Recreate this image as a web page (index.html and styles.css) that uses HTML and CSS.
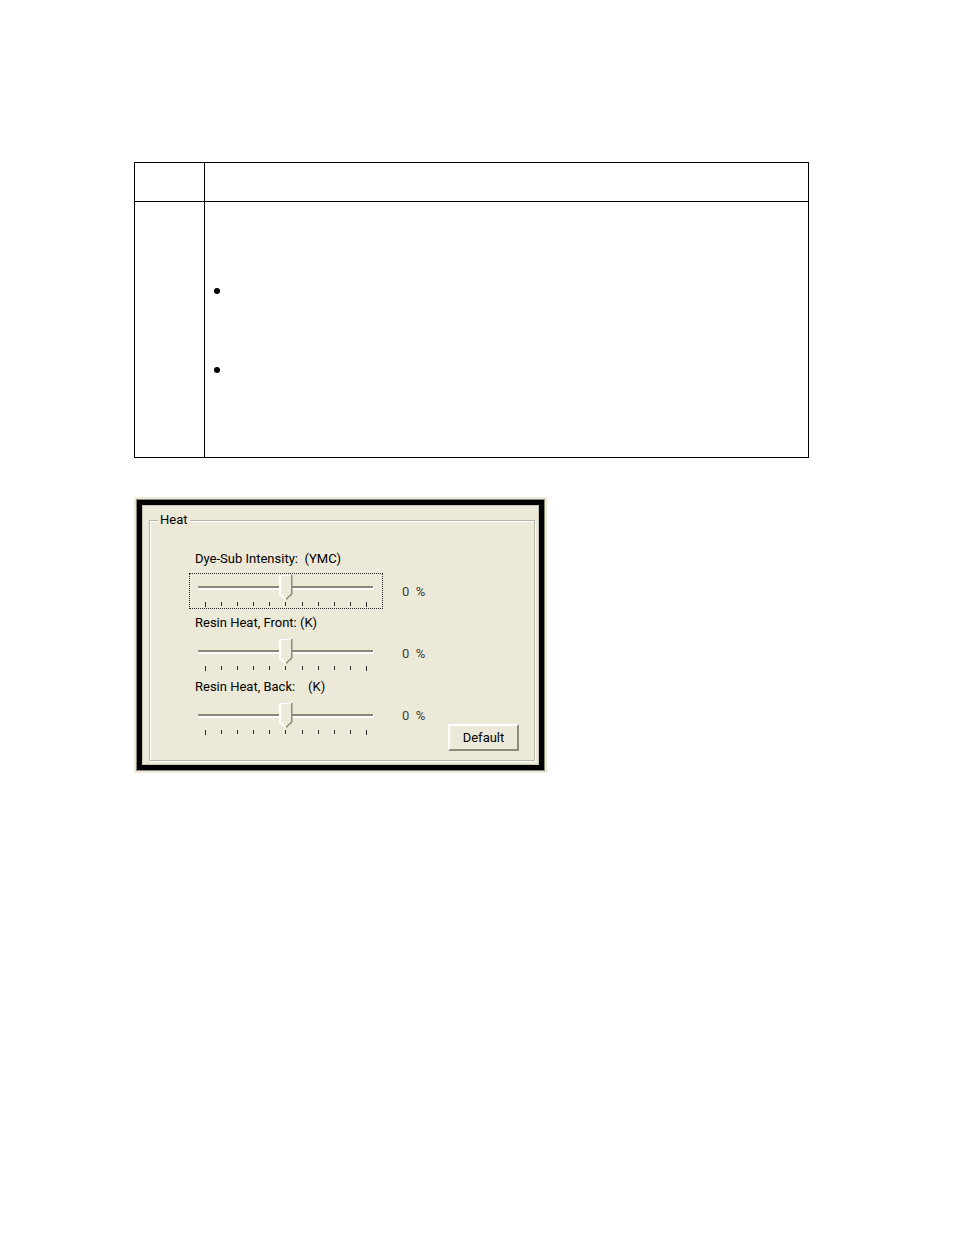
FILE: index.html
```
<!doctype html>
<html lang="en">
    <head>
        <meta charset="UTF-8">
        <meta name="viewport" content="width=device-width, initial-scale=1.0">
        <title>Heat</title>
        <link rel="stylesheet" href="styles.css">
    </head>
    <body>
        <main class="page">
            <table class="steps">
                <thead>
                    <tr>
                        <th class="step-col"></th>
                        <th></th>
                    </tr>
                </thead>
                <tbody>
                    <tr>
                        <td></td>
                        <td>
                            <ul class="step-list">
                                <li></li>
                                <li></li>
                            </ul>
                        </td>
                    </tr>
                </tbody>
            </table>

            <form class="dialog">
                <fieldset class="group">
                    <legend>Heat</legend>
                    <div class="group-body">
                        <div class="sliders">
                            <label for="dyeSub">Dye-Sub Intensity:  (YMC)</label>
                            <div class="trackbar focused">
                                <input type="range" id="dyeSub" min="-100" max="100" value="0">
                                <svg class="ticks" viewBox="0 0 176 6"><use href="#tickMarks"/></svg>
                            </div>
                            <label for="resinFront">Resin Heat, Front: (K)</label>
                            <div class="trackbar">
                                <input type="range" id="resinFront" min="-100" max="100" value="0">
                                <svg class="ticks" viewBox="0 0 176 6"><use href="#tickMarks"/></svg>
                            </div>
                            <label for="resinBack">Resin Heat, Back:    (K)</label>
                            <div class="trackbar">
                                <input type="range" id="resinBack" min="-100" max="100" value="0">
                                <svg class="ticks" viewBox="0 0 176 6"><use href="#tickMarks"/></svg>
                            </div>
                        </div>
                        <div class="values">
                            <output for="dyeSub">0  %</output>
                            <output for="resinFront">0  %</output>
                            <output for="resinBack">0  %</output>
                        </div>
                        <button type="reset" class="default-btn">Default</button>
                    </div>
                </fieldset>
            </form>
        </main>

        <!-- Tick marks shared by the three sliders, the end ones are longer -->
        <svg width="0" height="0" class="defs">
            <defs>
                <path id="tickMarks" fill="#2b2a24" d="M7 1h1v5h-1zM23 1h1v4h-1zM39 1h1v4h-1zM55 1h1v4h-1zM71 1h1v4h-1zM87 1h1v4h-1zM104 1h1v4h-1zM120 1h1v4h-1zM136 1h1v4h-1zM152 1h1v4h-1zM168 1h1v5h-1z"/>
            </defs>
        </svg>
    </body>
</html>
```
FILE: styles.css
```
:root {
    --face: #ece9d8;
    --shadow: #8c8978;
    --line: #b9b6a4;
    --light: #ffffff;
}
* {
    box-sizing: border-box;
}
body {
    margin: 0;
    background: #fff;
    color: #000;
    font-family: Roboto, "Liberation Sans", sans-serif;
    font-size: 13px;
    line-height: 16px;
}

.page {
    padding: 162px 145px 40px 134px;
}

.defs {
    display: block;
}

/* Table */
.steps {
    width: 100%;
    table-layout: fixed;
    border-collapse: collapse;
}

.steps th,
.steps td {
    border: 1px solid #000;
    padding: 0;
    vertical-align: top;
}

.steps th {
    height: 39px;
}

.steps .step-col {
    width: 70px;
}

.step-list {
    list-style: none;
    margin: 0;
    padding: 86px 9px 11px;
}

.step-list li {
    min-height: 79px;
}

.step-list li::before {
    content: "";
    display: block;
    width: 6px;
    height: 6px;
    border-radius: 50%;
    background: #000;
}

/* Dialog */
.dialog {
    width: fit-content;
    margin: 41px 0 0 2px;
    padding: 7px 4px 4px 7px;
    background: var(--face);
    border: 6px solid #000;
    outline: 1px solid var(--shadow);
    outline-offset: -1px;
    box-shadow: 0 0 0 2px var(--face), inset 0 0 0 1px #c9c6b5;
}

.group {
    min-width: 386px;
    margin: 0;
    padding: 0 15px 9px 39px;
    border: 1px solid var(--line);
    box-shadow: inset 1px 1px var(--light), 1px 1px var(--light);
}

.group legend {
    margin-left: -31px;
    padding: 0 2px;
    background: var(--face);
}

.group-body {
    display: flex;
    padding-top: 17px;
}

.sliders {
    display: flex;
    flex-direction: column;
    width: 194px;
}

.sliders label {
    height: 28px;
    padding-left: 6px;
    line-height: 28px;
    white-space: pre;
}

.trackbar {
    display: flex;
    flex-direction: column;
    align-items: center;
    height: 36px;
    padding-top: 1px;
    border: 1px solid transparent;
}

.trackbar.focused {
    border: 1px dotted #222;
}

.trackbar input {
    appearance: none;
    width: 176px;
    height: 26px;
    margin: 0;
    background: none;
    outline: none;
}

.trackbar input::-webkit-slider-runnable-track {
    height: 4px;
    background: linear-gradient(var(--shadow) 2px, var(--light) 2px);
    border-right: 1px solid var(--light);
}

/* Pointed thumb: flat body, light left edge, dark right edge */
.trackbar input::-webkit-slider-thumb {
    appearance: none;
    width: 14px;
    height: 26px;
    margin-top: -11px;
    clip-path: polygon(0 0, 100% 0, 100% 19px, 50% 100%, 0 19px);
    background:
        linear-gradient(45deg, var(--light) 65%, transparent 65%) left bottom / 7px 7px no-repeat,
        linear-gradient(-45deg, var(--shadow) 65%, transparent 65%) right bottom / 7px 7px no-repeat,
        linear-gradient(var(--light), var(--light)) left top / 12px 1px no-repeat,
        linear-gradient(90deg, var(--light) 2px, var(--face) 2px, var(--face) 12px, var(--shadow) 12px);
}

.ticks {
    display: block;
    width: 176px;
    height: 6px;
}

.values {
    display: flex;
    flex-direction: column;
    padding: 16px 0 4px 19px;
    color: #3f3e36;
}

.values output {
    height: 62px;
    line-height: 62px;
    white-space: pre;
}

.default-btn {
    align-self: flex-end;
    width: 71px;
    height: 27px;
    margin-left: auto;
    padding: 0;
    border: 2px solid;
    border-color: var(--light) var(--shadow) var(--shadow) var(--light);
    background: var(--face);
    color: #000;
    font: inherit;
}
```
